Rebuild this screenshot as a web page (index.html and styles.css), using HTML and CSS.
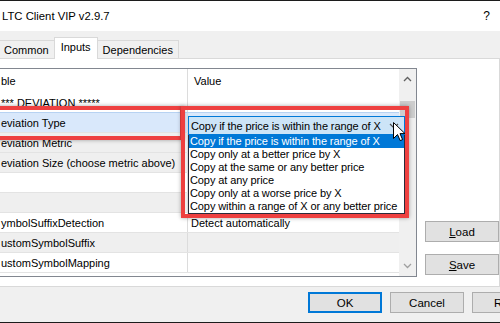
FILE: index.html
```html
<!DOCTYPE html>
<html>
    <head>
        <title>LTC Client VIP v2.9.7</title>
        <link rel="stylesheet" href="styles.css">
    </head>
    <body>
        <div class="window">
            <div class="titlebar">
                <span class="title">LTC Client VIP v2.9.7</span>
                <span class="help">?</span>
            </div>

            <div class="content">
                <div class="tabs">
                    <div class="tab">Common</div>
                    <div class="tab active">Inputs</div>
                    <div class="tab">Dependencies</div>
                </div>

                <div class="panel">
                    <div class="grid">
                        <div class="rows">
                            <div class="row head"><div class="name">ble</div><div class="value head-value">Value</div></div>
                            <div class="row"><div class="name">*** DEVIATION *****</div><div class="value"></div></div>
                            <div class="row selected"><div class="name">eviation Type</div><div class="value"></div></div>
                            <div class="row alt"><div class="name">eviation Metric</div><div class="value"></div></div>
                            <div class="row alt"><div class="name">eviation Size (choose metric above)</div><div class="value"></div></div>
                            <div class="row"><div class="name"></div><div class="value"></div></div>
                            <div class="row alt"><div class="name"></div><div class="value"></div></div>
                            <div class="row"><div class="name">ymbolSuffixDetection</div><div class="value">Detect automatically</div></div>
                            <div class="row alt"><div class="name">ustomSymbolSuffix</div><div class="value"></div></div>
                            <div class="row"><div class="name">ustomSymbolMapping</div><div class="value"></div></div>
                        </div>
                        <div class="scrollbar">
                            <svg class="arrow" width="9" height="6" viewBox="0 0 9 6"><path d="M1 5 L4.5 1.5 L8 5" fill="none" stroke="#606060" stroke-width="1.3"/></svg>
                            <div class="thumb"></div>
                            <div class="track"></div>
                            <svg class="arrow" width="9" height="6" viewBox="0 0 9 6"><path d="M1 1 L4.5 4.5 L8 1" fill="none" stroke="#a0a0a0" stroke-width="1.3"/></svg>
                        </div>

                        <!-- highlight marks drawn over the grid -->
                        <div class="mark mark-name"></div>
                        <div class="mark mark-combo"></div>

                        <div class="combo">
                            <span>Copy if the price is within the range of X</span>
                            <svg width="10" height="6" viewBox="0 0 10 6"><path d="M1 1 L5 5 L9 1" fill="none" stroke="#505050" stroke-width="1.2"/></svg>
                        </div>
                        <ul class="options">
                            <li class="picked">Copy if the price is within the range of X</li>
                            <li>Copy only at a better price by X</li>
                            <li>Copy at the same or any better price</li>
                            <li>Copy at any price</li>
                            <li>Copy only at a worse price by X</li>
                            <li>Copy within a range of X or any better price</li>
                        </ul>

                        <svg class="cursor" width="13" height="20" viewBox="0 0 13 20"><path d="M0.5 0.5 L0.5 16.5 L4.5 12.5 L7.2 18.6 L9.6 17.6 L7 11.6 L12 11.6 Z" fill="#fff" stroke="#000" stroke-width="1"/></svg>
                    </div>

                    <div class="side">
                        <button class="btn"><u>L</u>oad</button>
                        <button class="btn"><u>S</u>ave</button>
                    </div>
                </div>

                <div class="footer">
                    <button class="btn default">OK</button>
                    <button class="btn">Cancel</button>
                    <button class="btn">Reset</button>
                </div>
            </div>
        </div>
    </body>
</html>
```

FILE: styles.css
```css
body {
    margin: 0;
    width: 500px;
    height: 323px;
    overflow: hidden;
    background: #1c1c1c;
    font-family: "Liberation Sans", Arial, sans-serif;
    font-size: 11px;
    color: #000;
}

.window {
    border-top: 1px solid #1c1c1c;
    border-bottom: 1px solid #1c1c1c;
    height: 321px;
    display: flex;
    flex-direction: column;
    background: #f0f0f0;
}

.titlebar {
    height: 30px;
    background: #fff;
    display: flex;
    align-items: center;
    justify-content: space-between;
    padding: 0 10px 0 2px;
}

.title {
    font-size: 11.3px;
}

.help {
    font-size: 12px;
}

.content {
    flex: 1;
    display: flex;
    flex-direction: column;
}

/* tabs */
.tabs {
    display: flex;
    align-items: flex-end;
    height: 27px;
    position: relative;
    z-index: 1;
}

.tab {
    height: 17px;
    line-height: 18px;
    border: 1px solid #d9d9d9;
    border-bottom: none;
    padding: 0 5px;
    background: #f0f0f0;
}

.tab:first-child {
    margin-left: -1px;
    border-right: none;
    padding-left: 4px;
}

.tab.active {
    height: 21px;
    line-height: 19px;
    background: #fff;
    margin-bottom: -1px;
    padding: 0 6px 0 6px;
}

.tab.active + .tab {
    border-left: none;
}

/* panel */
.panel {
    display: flex;
    gap: 8px;
    margin-left: -12px;
    padding: 9px 0 9px 10px;
    height: 209px;
    background: #fff;
    border: 1px solid #d9d9d9;
}

.grid {
    position: relative;
    display: flex;
    width: 426px;
    height: 209px;
    box-sizing: border-box;
    border: 1px solid #828790;
}

.rows {
    flex: 1;
    overflow: hidden;
}

.row {
    display: flex;
    height: 19px;
    border-bottom: 1px solid #e3e3e3;
    background: #fff;
}

.row.alt {
    background: #efefef;
}

.row.selected {
    background: #d9e8fb;
    border-top: 1px solid #b7d2f2;
    margin-top: -1px;
}

.row.head {
    height: 24px;
    border-bottom: none;
}

.name,
.value {
    display: flex;
    align-items: center;
    white-space: nowrap;
    overflow: hidden;
}

.name {
    width: 186px;
    padding-left: 1px;
    border-right: 1px solid #dcdcdc;
}

.value {
    flex: 1;
    padding-left: 3px;
}

.head-value {
    padding-left: 6px;
}

.scrollbar {
    width: 17px;
    background: #f0f0f0;
    display: flex;
    flex-direction: column;
    align-items: center;
}

.scrollbar .arrow {
    margin: 7px 0;
}

.thumb {
    width: 15px;
    height: 17px;
    margin-top: 12px;
    background: #cdcdcd;
}

.track {
    flex: 1;
}

/* overlays */
.mark {
    position: absolute;
    box-sizing: border-box;
    border: 4px solid #ee4040;
    box-shadow: 0 0 4px rgba(0, 0, 0, .35);
}

.mark-name {
    left: -6px;
    top: 37px;
    width: 190px;
    height: 34px;
}

.mark-combo {
    left: 181px;
    top: 37px;
    width: 228px;
    height: 112px;
}

.combo {
    position: absolute;
    left: 188px;
    top: 47px;
    width: 217px;
    height: 19px;
    box-sizing: border-box;
    border: 1px solid #0078d7;
    background: #cce4f7;
    display: flex;
    align-items: center;
    justify-content: space-between;
    padding: 0 5px 0 2px;
    white-space: nowrap;
    letter-spacing: -0.1px;
}

.options {
    position: absolute;
    left: 188px;
    top: 66px;
    width: 217px;
    margin: 0;
    padding: 0;
    list-style: none;
    box-sizing: border-box;
    border: 1px solid #2a2a3a;
    border-top: none;
    background: #fff;
    letter-spacing: -0.1px;
}

.options li {
    height: 13px;
    line-height: 13px;
    padding-left: 1px;
    white-space: nowrap;
}

.options li.picked {
    background: #0078d7;
    color: #fff;
}

.cursor {
    position: absolute;
    left: 393px;
    top: 53px;
}

/* buttons */
.side {
    display: flex;
    flex-direction: column;
    gap: 12px;
    padding-top: 153px;
}

.btn {
    font-family: inherit;
    font-size: 11.5px;
    height: 21px;
    width: 74px;
    padding: 0;
    background: #e1e1e1;
    border: 1px solid #adadad;
    color: #000;
}

.btn.default {
    border: 2px solid #0078d7;
}

.footer {
    display: flex;
    gap: 8px;
    padding: 5px 0 0 308px;
    flex: 1;
}

.footer .btn {
    flex: none;
}
```
